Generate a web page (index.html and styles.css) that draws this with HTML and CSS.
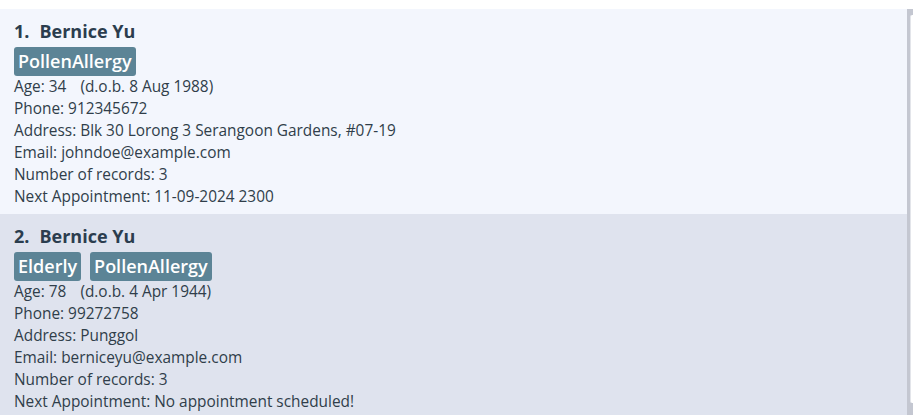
FILE: index.html
```html
<!DOCTYPE html>
<html>
<head>
<meta charset="utf-8">
<link rel="stylesheet" href="styles.css">
</head>
<body>
<div class="pane">
  <div class="list">
    <div class="card card-odd">
      <div class="name-row"><span class="idx">1.</span><span class="name">Bernice Yu</span></div>
      <div class="tags"><span class="tag">PollenAllergy</span></div>
      <div class="line"><span>Age: 34</span><span class="dob">(d.o.b. 8 Aug 1988)</span></div>
      <div class="line">Phone: 912345672</div>
      <div class="line">Address: Blk 30 Lorong 3 Serangoon Gardens, #07-19</div>
      <div class="line">Email: johndoe@example.com</div>
      <div class="line">Number of records: 3</div>
      <div class="line">Next Appointment: 11-09-2024 2300</div>
    </div>
    <div class="card card-even">
      <div class="name-row"><span class="idx">2.</span><span class="name">Bernice Yu</span></div>
      <div class="tags"><span class="tag">Elderly</span><span class="tag">PollenAllergy</span></div>
      <div class="line"><span>Age: 78</span><span class="dob">(d.o.b. 4 Apr 1944)</span></div>
      <div class="line">Phone: 99272758</div>
      <div class="line">Address: Punggol</div>
      <div class="line">Email: berniceyu@example.com</div>
      <div class="line">Number of records: 3</div>
      <div class="line">Next Appointment: No appointment scheduled!</div>
    </div>
  </div>
  <div class="scrollbar"><div class="thumb"></div></div>
</div>
</body>
</html>
```
FILE: styles.css
```css
html, body {
  margin: 0;
  padding: 0;
  background: #ffffff;
  height: 415px;
  overflow: hidden;
}
body {
  font-family: "Open Sans", "Noto Sans", sans-serif;
  color: #303e4a;
  padding-top: 9px;
}
.pane {
  display: flex;
  height: 406px;
}
.list {
  flex: 1;
  display: flex;
  flex-direction: column;
  overflow: hidden;
}
.card {
  padding: 10px 14px 6px;
  flex-shrink: 0;
}
.card-odd { background: #f3f6fd; }
.card-even { background: #dfe3ee; }
.name-row {
  display: flex;
  gap: 10px;
  height: 24px;
  align-items: center;
  font-size: 18px;
  font-weight: 700;
  color: #2b3d4e;
}
.tags {
  display: flex;
  gap: 9px;
  margin-top: 4px;
}
.tag {
  background: #5c8496;
  color: #ffffff;
  font-size: 18px;
  font-weight: 600;
  height: 29px;
  line-height: 29px;
  padding: 0 4px;
  border-radius: 3px;
}
.line {
  font-size: 15.4px;
  line-height: 22px;
  height: 22px;
  white-space: nowrap;
  display: flex;
  gap: 14px;
}
.scrollbar {
  width: 6px;
  background: #c4c7d1;
  position: relative;
}
.thumb {
  position: absolute;
  left: 3px;
  right: 0;
  top: 6px;
  bottom: 12px;
  background: #ffffff;
  border-left: 1px solid #e3e5ea;
  border-radius: 2px 0 0 2px;
}
```
